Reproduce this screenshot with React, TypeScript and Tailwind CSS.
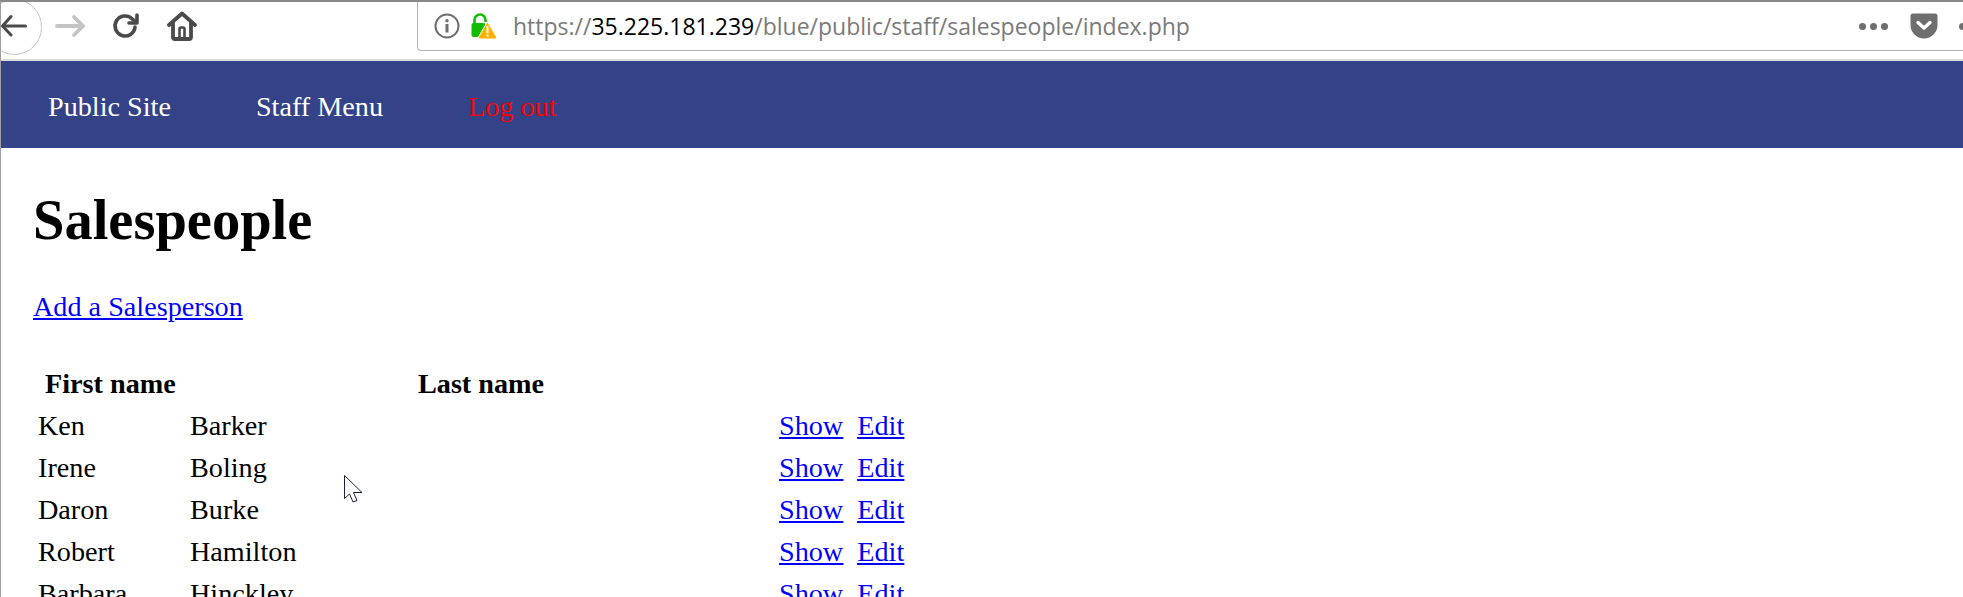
import React from "react";

const people = [
  ["Ken", "Barker"],
  ["Irene", "Boling"],
  ["Daron", "Burke"],
  ["Robert", "Hamilton"],
  ["Barbara", "Hinckley"],
];

const Toolbar = () => (
  <div className="relative flex h-[57px] items-start bg-white">
    {/* back button circle hangs over the toolbar edge */}
    <div className="absolute left-[-14px] top-[-3px] h-[56px] w-[55px] rounded-full border border-[#c4c4c4]" />
    <svg className="relative mt-[8px] h-[32px] w-[32px] shrink-0" viewBox="0 0 32 32" fill="none" stroke="#4a4a4a" strokeWidth="3" strokeLinecap="round" strokeLinejoin="round">
      <path d="M24.5 16H3M10 6.5 1.5 16l8.5 9" />
    </svg>
    <svg className="relative ml-[22px] mt-[8px] h-[32px] w-[32px] shrink-0" viewBox="0 0 32 32" fill="none" stroke="#c4c4c4" strokeWidth="3.8" strokeLinecap="round" strokeLinejoin="round">
      <path d="M2 16h26M19 7l9 9-9 9" />
    </svg>
    <svg className="ml-[25px] mt-[10px] h-[28px] w-[28px] shrink-0" viewBox="0 0 28 28" fill="none" stroke="#4a4a4a" strokeWidth="3.6" strokeLinecap="round" strokeLinejoin="round">
      <path d="M23 15a10 10 0 1 1-3-8.2L24 10" />
      <path d="M25 3v8h-8" />
    </svg>
    <svg className="ml-[27px] mt-[9px] h-[30px] w-[30px] shrink-0" viewBox="0 0 30 30" fill="none" stroke="#4a4a4a" strokeWidth="3.8" strokeLinecap="round" strokeLinejoin="round">
      <path d="M2 14 15 2.5 28 14" />
      <path d="M6 12v14a2 2 0 0 0 2 2h14a2 2 0 0 0 2-2V12" />
      <path d="M12.5 27V18a1.5 1.5 0 0 1 1.5-1.5h2a1.5 1.5 0 0 1 1.5 1.5v9" strokeWidth="2.6" />
    </svg>
    <div className="ml-[220px] flex h-[49px] flex-1 items-center rounded-bl-[4px] border-b border-l border-[#b4b4b4] pl-[16px]">
      <svg className="h-[26px] w-[26px] shrink-0" viewBox="0 0 26 26" fill="none">
        <circle cx="13" cy="13" r="11.5" stroke="#6e6e6e" strokeWidth="2" />
        <circle cx="13" cy="7.8" r="1.7" fill="#6e6e6e" />
        <rect x="11.5" y="11" width="3" height="8.5" fill="#6e6e6e" />
      </svg>
      <svg className="ml-[11px] h-[28px] w-[26px] shrink-0" viewBox="0 0 26 28" fill="none">
        <path d="M3.5 11V8a5.5 5.5 0 0 1 11 0v2" stroke="#12bc00" strokeWidth="2.6" />
        <rect x="0.5" y="11" width="14" height="14" rx="2" fill="#12bc00" />
        <path d="M16.5 9.5 25.5 25a1.5 1.5 0 0 1-1.3 2H8.8a1.5 1.5 0 0 1-1.3-2Z" fill="#ffb000" stroke="#fff" strokeWidth="1" />
        <rect x="15.5" y="14" width="2" height="7" fill="#fff" />
        <rect x="15.5" y="22.5" width="2" height="2" fill="#fff" />
      </svg>
      <span className="ml-[16px] whitespace-nowrap font-['Open_Sans',sans-serif] text-[23px] text-[#7a7a7a]">
        https://<span className="text-black">35.225.181.239</span>/blue/public/staff/salespeople/index.php
      </span>
      <div className="ml-auto flex items-center gap-[4px]">
        <span className="h-[7px] w-[7px] rounded-full bg-[#6e6e6e]" />
        <span className="h-[7px] w-[7px] rounded-full bg-[#6e6e6e]" />
        <span className="h-[7px] w-[7px] rounded-full bg-[#6e6e6e]" />
      </div>
      <svg className="ml-[22px] mr-[21px] h-[26px] w-[28px] shrink-0" viewBox="0 0 28 26" fill="none">
        <path d="M3 0.5h22A2.5 2.5 0 0 1 27.500 3v9a13.500 13.500 0 0 1-27 0V3A2.500 2.500 0 0 1 3 .5Z" fill="#6e6e6e" />
        <path d="M8 9.500l6 5.500 6-5.500" stroke="#fff" strokeWidth="3.400" strokeLinecap="round" strokeLinejoin="round" />
      </svg>
      {/* next toolbar icon, cut off by the screenshot edge */}
      <span className="mr-[-3px] h-[7px] w-[7px] shrink-0 rounded-full bg-[#6e6e6e]" />
    </div>
  </div>
);

const Cursor = () => (
  <svg className="absolute left-[343px] top-[473px] h-[28px] w-[19px]" viewBox="0 0 19 28" fill="#fff" stroke="#1a2040" strokeWidth="1">
    <path d="M0.500 0.500V23.500L5.500 19 9 27 13 25.500 9.500 17.500H18Z" />
  </svg>
);

export default function App() {
  return (
    <div className="relative h-[597px] overflow-hidden border-l border-l-[#a0a0a0] border-t-2 border-t-[#8a8a8a] bg-white font-['Liberation_Serif',serif] text-black">
      <Toolbar />
      <div className="h-[2px] bg-[#dcdcdc]" />
      <nav className="flex h-[87px] items-center gap-[85px] bg-[#344388] pl-[47px] pt-[6px] text-[28.2px]">
        <span className="text-white">Public Site</span>
        <span className="text-white">Staff Menu</span>
        <span className="text-[#ff0000]">Log out</span>
      </nav>
      <main className="pl-[32px]">
        <h1 className="mt-[41px] text-[56.5px] font-bold leading-[62px]">Salespeople</h1>
        <a href="#" className="mt-[40px] block text-[28.2px] leading-[32px] text-[#0000ff] underline">
          Add a Salesperson
        </a>
        <div className="mt-[40px] grid auto-rows-[42px] grid-cols-[152px_228px_361px_1fr] items-center pl-[5px] text-[28.2px]">
          <div className="pl-[7px] font-bold">First name</div>
          <div />
          <div className="col-span-2 font-bold">Last name</div>
          {people.map(([first, last]) => (
            <React.Fragment key={last}>
              <div>{first}</div>
              <div>{last}</div>
              <div />
              <div className="flex gap-[14px] text-[#0000ff] underline">
                <a href="#">Show</a>
                <a href="#">Edit</a>
              </div>
            </React.Fragment>
          ))}
        </div>
      </main>
      <Cursor />
    </div>
  );
}
